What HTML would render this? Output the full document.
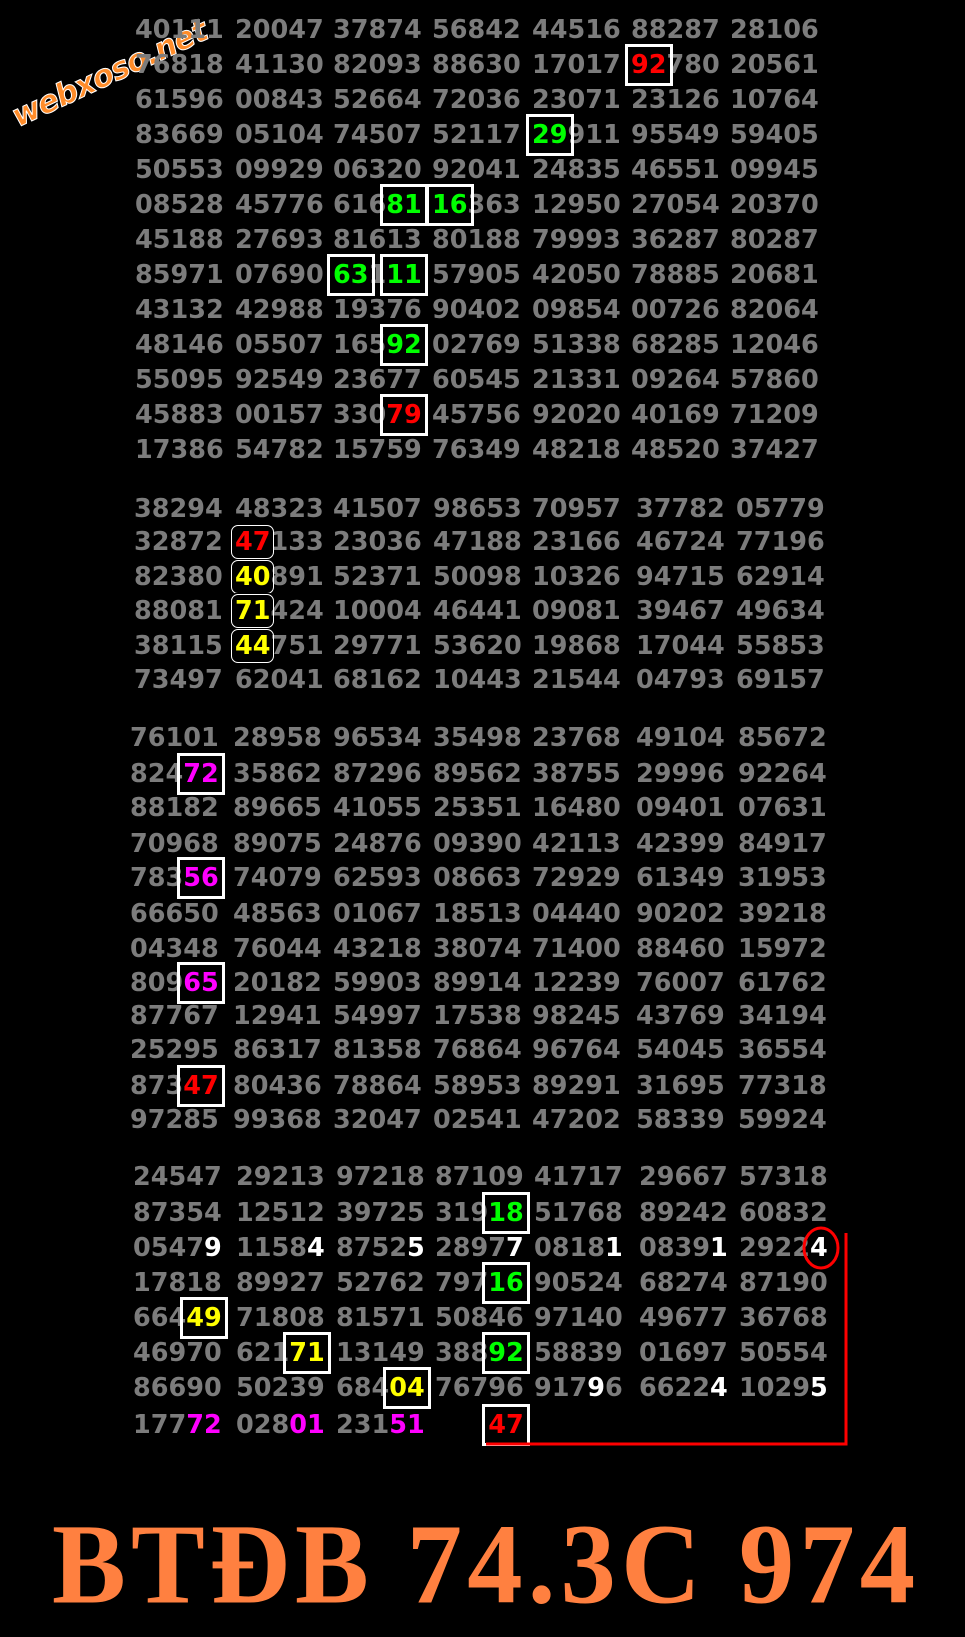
<!DOCTYPE html>
<html><head><meta charset="utf-8"><style>
html,body{margin:0;padding:0;background:#000;}
body{width:965px;height:1637px;position:relative;overflow:hidden;font-family:"DejaVu Sans","Liberation Sans",sans-serif;font-weight:bold;font-size:25.5px;color:#7c7c7c;}
.r{position:absolute;left:0;width:965px;height:36px;line-height:36px;white-space:nowrap;}
.r>span{position:absolute;top:0;}
.s1 span:nth-child(1){left:135px}.s1 span:nth-child(2){left:235px}.s1 span:nth-child(3){left:333px}.s1 span:nth-child(4){left:432px}.s1 span:nth-child(5){left:532px}.s1 span:nth-child(6){left:631px}.s1 span:nth-child(7){left:730px}
.s2 span:nth-child(1){left:134px}.s2 span:nth-child(2){left:235px}.s2 span:nth-child(3){left:333px}.s2 span:nth-child(4){left:433px}.s2 span:nth-child(5){left:532px}.s2 span:nth-child(6){left:636px}.s2 span:nth-child(7){left:736px}
.s3 span:nth-child(1){left:130px}.s3 span:nth-child(2){left:233px}.s3 span:nth-child(3){left:333px}.s3 span:nth-child(4){left:433px}.s3 span:nth-child(5){left:532px}.s3 span:nth-child(6){left:636px}.s3 span:nth-child(7){left:738px}
.s4 span:nth-child(1){left:133px}.s4 span:nth-child(2){left:236px}.s4 span:nth-child(3){left:336px}.s4 span:nth-child(4){left:435px}.s4 span:nth-child(5){left:534px}.s4 span:nth-child(6){left:639px}.s4 span:nth-child(7){left:739px}
b{font-weight:bold;position:relative;display:inline-block;}
b.x::after{content:"";position:absolute;left:-6px;right:-6px;top:-3px;bottom:-3px;border:3px solid #fff;}
b.o{background:#000;}
b.o::after{content:"";position:absolute;left:-4px;right:-3px;top:1px;bottom:1px;border:1px solid #fff;border-radius:7px;}
.R{color:#ff0000}.G{color:#00ff00}.Y{color:#ffff00}.M{color:#ff00ff}.W{color:#fff}
.h{visibility:hidden}
</style></head><body>

<div style="position:absolute;left:6px;top:102px;transform:rotate(-25deg);transform-origin:left top;font-family:'DejaVu Sans',sans-serif;font-style:italic;font-weight:bold;font-size:31px;color:#ff8c2a;-webkit-text-stroke:1px #fff;letter-spacing:-1px;">webxoso.net</div>

<!-- Section 1 -->
<div class="r s1" style="top:12px"><span>40111</span><span>20047</span><span>37874</span><span>56842</span><span>44516</span><span>88287</span><span>28106</span></div>
<div class="r s1" style="top:47px"><span>76818</span><span>41130</span><span>82093</span><span>88630</span><span>17017</span><span><b class="x R">92</b>780</span><span>20561</span></div>
<div class="r s1" style="top:82px"><span>61596</span><span>00843</span><span>52664</span><span>72036</span><span>23071</span><span>23126</span><span>10764</span></div>
<div class="r s1" style="top:117px"><span>83669</span><span>05104</span><span>74507</span><span>52117</span><span><b class="x G">29</b>911</span><span>95549</span><span>59405</span></div>
<div class="r s1" style="top:152px"><span>50553</span><span>09929</span><span>06320</span><span>92041</span><span>24835</span><span>46551</span><span>09945</span></div>
<div class="r s1" style="top:187px"><span>08528</span><span>45776</span><span>616<b class="x G">81</b></span><span><b class="x G">16</b>363</span><span>12950</span><span>27054</span><span>20370</span></div>
<div class="r s1" style="top:222px"><span>45188</span><span>27693</span><span>81613</span><span>80188</span><span>79993</span><span>36287</span><span>80287</span></div>
<div class="r s1" style="top:257px"><span>85971</span><span>07690</span><span><b class="x G">63</b>1<b class="x G">11</b></span><span>57905</span><span>42050</span><span>78885</span><span>20681</span></div>
<div class="r s1" style="top:292px"><span>43132</span><span>42988</span><span>19376</span><span>90402</span><span>09854</span><span>00726</span><span>82064</span></div>
<div class="r s1" style="top:327px"><span>48146</span><span>05507</span><span>165<b class="x G">92</b></span><span>02769</span><span>51338</span><span>68285</span><span>12046</span></div>
<div class="r s1" style="top:362px"><span>55095</span><span>92549</span><span>23677</span><span>60545</span><span>21331</span><span>09264</span><span>57860</span></div>
<div class="r s1" style="top:397px"><span>45883</span><span>00157</span><span>330<b class="x R">79</b></span><span>45756</span><span>92020</span><span>40169</span><span>71209</span></div>
<div class="r s1" style="top:432px"><span>17386</span><span>54782</span><span>15759</span><span>76349</span><span>48218</span><span>48520</span><span>37427</span></div>

<!-- Section 2 -->
<div class="r s2" style="top:491px"><span>38294</span><span>48323</span><span>41507</span><span>98653</span><span>70957</span><span>37782</span><span>05779</span></div>
<div class="r s2" style="top:524px"><span>32872</span><span><b class="o R">47</b>133</span><span>23036</span><span>47188</span><span>23166</span><span>46724</span><span>77196</span></div>
<div class="r s2" style="top:559px"><span>82380</span><span><b class="o Y">40</b>891</span><span>52371</span><span>50098</span><span>10326</span><span>94715</span><span>62914</span></div>
<div class="r s2" style="top:593px"><span>88081</span><span><b class="o Y">71</b>424</span><span>10004</span><span>46441</span><span>09081</span><span>39467</span><span>49634</span></div>
<div class="r s2" style="top:628px"><span>38115</span><span><b class="o Y">44</b>751</span><span>29771</span><span>53620</span><span>19868</span><span>17044</span><span>55853</span></div>
<div class="r s2" style="top:662px"><span>73497</span><span>62041</span><span>68162</span><span>10443</span><span>21544</span><span>04793</span><span>69157</span></div>

<!-- Section 3 -->
<div class="r s3" style="top:720px"><span>76101</span><span>28958</span><span>96534</span><span>35498</span><span>23768</span><span>49104</span><span>85672</span></div>
<div class="r s3" style="top:756px"><span>824<b class="x M">72</b></span><span>35862</span><span>87296</span><span>89562</span><span>38755</span><span>29996</span><span>92264</span></div>
<div class="r s3" style="top:790px"><span>88182</span><span>89665</span><span>41055</span><span>25351</span><span>16480</span><span>09401</span><span>07631</span></div>
<div class="r s3" style="top:826px"><span>70968</span><span>89075</span><span>24876</span><span>09390</span><span>42113</span><span>42399</span><span>84917</span></div>
<div class="r s3" style="top:860px"><span>783<b class="x M">56</b></span><span>74079</span><span>62593</span><span>08663</span><span>72929</span><span>61349</span><span>31953</span></div>
<div class="r s3" style="top:896px"><span>66650</span><span>48563</span><span>01067</span><span>18513</span><span>04440</span><span>90202</span><span>39218</span></div>
<div class="r s3" style="top:931px"><span>04348</span><span>76044</span><span>43218</span><span>38074</span><span>71400</span><span>88460</span><span>15972</span></div>
<div class="r s3" style="top:965px"><span>809<b class="x M">65</b></span><span>20182</span><span>59903</span><span>89914</span><span>12239</span><span>76007</span><span>61762</span></div>
<div class="r s3" style="top:998px"><span>87767</span><span>12941</span><span>54997</span><span>17538</span><span>98245</span><span>43769</span><span>34194</span></div>
<div class="r s3" style="top:1032px"><span>25295</span><span>86317</span><span>81358</span><span>76864</span><span>96764</span><span>54045</span><span>36554</span></div>
<div class="r s3" style="top:1068px"><span>873<b class="x R">47</b></span><span>80436</span><span>78864</span><span>58953</span><span>89291</span><span>31695</span><span>77318</span></div>
<div class="r s3" style="top:1102px"><span>97285</span><span>99368</span><span>32047</span><span>02541</span><span>47202</span><span>58339</span><span>59924</span></div>

<!-- Section 4 -->
<div class="r s4" style="top:1159px"><span>24547</span><span>29213</span><span>97218</span><span>87109</span><span>41717</span><span>29667</span><span>57318</span></div>
<div class="r s4" style="top:1195px"><span>87354</span><span>12512</span><span>39725</span><span>319<b class="x G">18</b></span><span>51768</span><span>89242</span><span>60832</span></div>
<div class="r s4" style="top:1230px"><span>0547<b class="W">9</b></span><span>1158<b class="W">4</b></span><span>8752<b class="W">5</b></span><span>2897<b class="W">7</b></span><span>0818<b class="W">1</b></span><span>0839<b class="W">1</b></span><span>2922<b class="W">4</b></span></div>
<div class="r s4" style="top:1265px"><span>17818</span><span>89927</span><span>52762</span><span>797<b class="x G">16</b></span><span>90524</span><span>68274</span><span>87190</span></div>
<div class="r s4" style="top:1300px"><span>664<b class="x Y">49</b></span><span>71808</span><span>81571</span><span>50846</span><span>97140</span><span>49677</span><span>36768</span></div>
<div class="r s4" style="top:1335px"><span>46970</span><span>621<b class="x Y">71</b></span><span>13149</span><span>388<b class="x G">92</b></span><span>58839</span><span>01697</span><span>50554</span></div>
<div class="r s4" style="top:1370px"><span>86690</span><span>50239</span><span>684<b class="x Y">04</b></span><span>76796</span><span>917<b class="W">9</b>6</span><span>6622<b class="W">4</b></span><span>1029<b class="W">5</b></span></div>
<div class="r s4" style="top:1407px"><span>177<b class="M">72</b></span><span>028<b class="M">01</b></span><span>231<b class="M">51</b></span><span><i class="h" style="font-style:normal">000</i><b class="x R">47</b></span></div>

<svg width="965" height="1637" style="position:absolute;left:0;top:0" xmlns="http://www.w3.org/2000/svg">
<ellipse cx="821" cy="1248" rx="17" ry="20" fill="none" stroke="#ff0000" stroke-width="3"/>
<polyline points="846,1233 846,1444 486,1444" fill="none" stroke="#ff0000" stroke-width="3"/>
</svg>

<div style="position:absolute;left:52px;top:1502px;font-family:'Liberation Serif','DejaVu Serif',serif;font-weight:bold;font-size:108px;line-height:120px;color:#ff8040;letter-spacing:5px;white-space:nowrap;transform:scale(1.025,1.06);transform-origin:left top;">BTĐB 74.3C 974</div>

</body></html>
